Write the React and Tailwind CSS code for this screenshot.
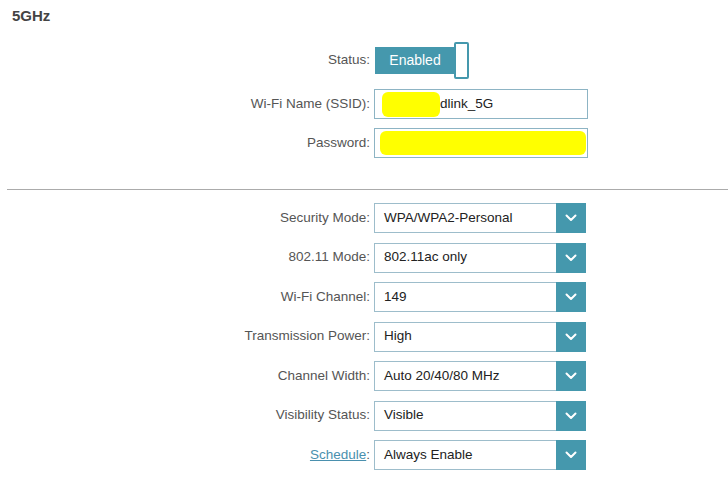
import React from 'react';

const teal = 'bg-[#4598ad]';

const Chevron = () => (
    <svg width="12" height="8" viewBox="0 0 12 8" fill="none">
        <path d="M1.5 1.5 L6 6 L10.5 1.5" stroke="white" strokeWidth="2" strokeLinecap="round" strokeLinejoin="round" />
    </svg>
);

const Label = ({ children }) => (
    <div className="w-[370px] text-right text-[13.5px] text-[#555]">{children}</div>
);

const SelectRow = ({ label, value }) => (
    <div className="flex items-center h-[30px]">
        <Label>{label}</Label>
        <div className="ml-[4px] flex h-[30px] w-[212px] items-stretch border border-[#9dbdcb] bg-white">
            <div className="flex flex-1 items-center pl-[9px] text-[13.5px] text-[#222]">{value}</div>
            <div className={`${teal} -my-px -mr-px flex w-[30px] items-center justify-center`}>
                <Chevron />
            </div>
        </div>
    </div>
);

const App = () => {
    const selects = [
        { label: 'Security Mode:', value: 'WPA/WPA2-Personal' },
        { label: '802.11 Mode:', value: '802.11ac only' },
        { label: 'Wi-Fi Channel:', value: '149' },
        { label: 'Transmission Power:', value: 'High' },
        { label: 'Channel Width:', value: 'Auto 20/40/80 MHz' },
        { label: 'Visibility Status:', value: 'Visible' },
    ];

    return (
        <div className="h-[485px] w-[728px] overflow-hidden bg-white font-['Liberation_Sans',Arial,sans-serif]">
            <div className="pl-[12px] pt-[6px] text-[15px] font-bold leading-[20px] text-[#444]">5GHz</div>

            <div className="mt-[16px] flex flex-col">
                {/* status */}
                <div className="flex h-[37px] items-center">
                    <Label>Status:</Label>
                    <div className="ml-[5px] flex items-center">
                        <div className={`${teal} flex h-[27px] w-[80px] items-center justify-center text-[14px] text-white`}>
                            Enabled
                        </div>
                        <div className="-ml-px h-[37px] w-[15px] rounded-[2px] border-2 border-[#4598ad] bg-white"></div>
                    </div>
                </div>

                <div className="mt-[10px] flex h-[30px] items-center">
                    <Label>Wi-Fi Name (SSID):</Label>
                    <div className="ml-[4px] flex h-[30px] w-[214px] items-center border border-[#8db4c4] bg-white pl-[7px]">
                        <div className="h-[25px] w-[58px] rounded-[6px] bg-[#ffff00]"></div>
                        <span className="text-[13.5px] text-[#222]">dlink_5G</span>
                    </div>
                </div>

                <div className="mt-[9px] flex h-[30px] items-center">
                    <Label>Password:</Label>
                    <div className="ml-[4px] flex h-[30px] w-[214px] items-center border border-[#8db4c4] bg-white pl-[5px] pr-[1px]">
                        <div className="h-[24px] w-full rounded-[6px] bg-[#ffff00]"></div>
                    </div>
                </div>
            </div>

            <div className="ml-[7px] mt-[31px] h-px bg-[#ababab]"></div>

            <div className="mt-[13px] flex flex-col gap-[9.5px]">
                {selects.map((s) => (
                    <SelectRow key={s.label} label={s.label} value={s.value} />
                ))}
                <SelectRow
                    label={
                        <span>
                            <span className="text-[#4a90ae] underline">Schedule</span>:
                        </span>
                    }
                    value="Always Enable"
                />
            </div>
        </div>
    );
};

export default App;
